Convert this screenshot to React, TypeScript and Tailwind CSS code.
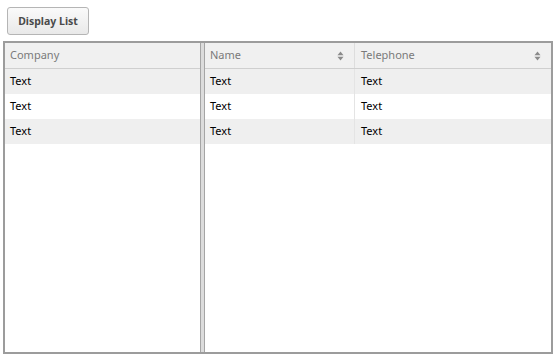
import React from "react";

const SortIcon = () => (
  <svg width="7" height="10" viewBox="0 0 7 10" className="shrink-0">
    <path d="M3.5 0.5 L6.5 4.3 L0.5 4.3 Z" fill="#8a8a8a" />
    <path d="M3.5 9.5 L6.5 5.7 L0.5 5.7 Z" fill="#8a8a8a" />
  </svg>
);

const rows = ["Text", "Text", "Text"];

export default function App() {
  return (
    <div
      className="w-[557px] h-[361px] bg-white relative"
      style={{ fontFamily: '"Noto Sans", "Open Sans", sans-serif' }}
    >
      <div className="flex pt-[7px] pl-[7px]">
        <button className="h-[28px] w-[82px] rounded-[3px] border border-[#b5b5b5] bg-gradient-to-b from-[#fafafa] to-[#e9e9e9] text-[10.5px] font-bold text-[#4a4a4a] leading-none">
          Display List
        </button>
      </div>
      <div className="mt-[6px] ml-[3px] w-[550px] h-[313px] border-2 border-[#9c9c9c] flex">
        <div className="w-[195px] flex flex-col">
          <div className="h-[26px] bg-[#f0f0f0] border-b border-[#cfcfcf] flex items-center pl-[5px] text-[11px] text-[#7a7a7a]">
            Company
          </div>
          {rows.map((r, i) => (
            <div
              key={i}
              className={`h-[25px] flex items-center pl-[5px] text-[11px] text-black ${i % 2 === 0 ? "bg-[#efefef]" : "bg-white"}`}
            >
              {r}
            </div>
          ))}
        </div>
        <div className="w-[5px] bg-[#dcdcdc] border-x border-[#a5a5a5]" />
        <div className="flex-1 flex flex-col">
          <div className="h-[26px] bg-[#f0f0f0] border-b border-[#cfcfcf] flex text-[11px] text-[#7a7a7a]">
            <div className="w-[150px] flex items-center justify-between pl-[5px] pr-[10px] border-r border-[#dddddd]">
              <span>Name</span>
              <SortIcon />
            </div>
            <div className="flex-1 flex items-center justify-between pl-[6px] pr-[10px]">
              <span>Telephone</span>
              <SortIcon />
            </div>
          </div>
          {rows.map((r, i) => (
            <div
              key={i}
              className={`h-[25px] flex text-[11px] text-black ${i % 2 === 0 ? "bg-[#efefef]" : "bg-white"}`}
            >
              <div className="w-[150px] flex items-center pl-[5px] border-r border-[#e4e4e4]">{r}</div>
              <div className="flex-1 flex items-center pl-[6px]">{r}</div>
            </div>
          ))}
        </div>
      </div>
    </div>
  );
}
